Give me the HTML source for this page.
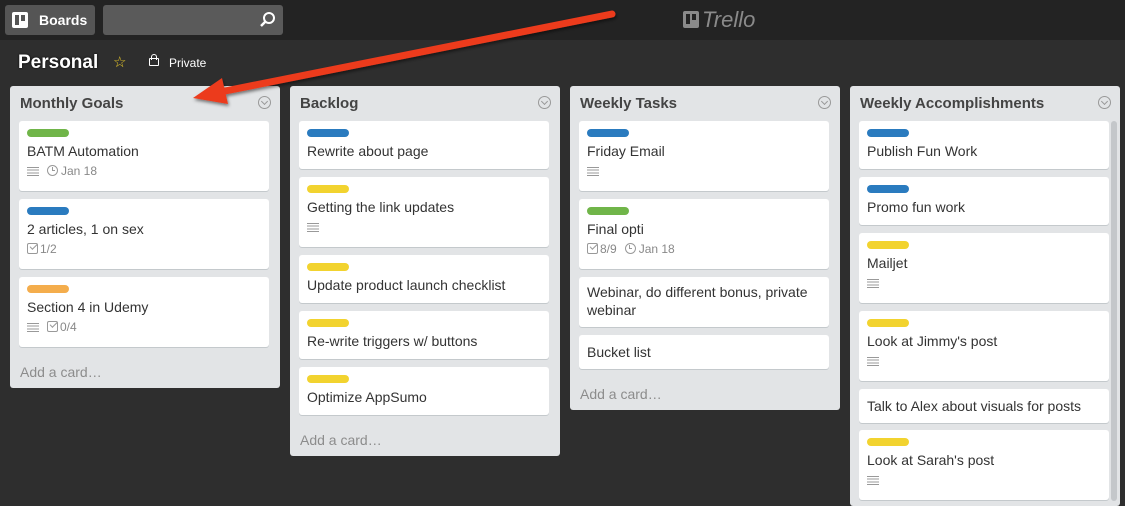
<!DOCTYPE html>
<html style="width:1125px;height:506px;overflow:hidden"><head><meta charset="utf-8"><style>
*{box-sizing:border-box;margin:0;padding:0}
body{width:1125px;height:506px;overflow:hidden;background:#2e2e2e;font-family:"Liberation Sans",sans-serif;position:relative}
.hdr{position:absolute;left:0;top:0;width:1125px;height:40px;background:#232323}
.btn{position:absolute;top:5px;height:30px;background:#555;border-radius:3px}
.list{position:absolute;top:86px;width:270px;background:#e2e4e6;border-radius:3px}
.lt{position:absolute;left:10px;top:9px;font-weight:bold;font-size:15px;color:#444}
.chev{position:absolute;right:9px;top:10px;width:13px;height:13px;border:1.5px solid #999;border-radius:50%}
.chev:after{content:"";position:absolute;left:3px;top:1.5px;width:4px;height:4px;border-right:1.5px solid #999;border-bottom:1.5px solid #999;transform:rotate(45deg)}
.card{position:absolute;left:9px;width:250px;background:#fff;border-radius:3px;box-shadow:0 1px 0 #c4c9cc;padding:8px 8px 0 8px;font-size:14px;color:#333;line-height:18px}
.nl{padding-top:6px}
.lb{width:42px;height:8px;border-radius:4px;margin-bottom:5px}
.g{background:#70b549}.b{background:#2a7bbf}.y{background:#f2d32f}.o{background:#f4ad4c}
.meta{margin-top:2px;font-size:12px;color:#888;height:18px;display:flex;align-items:center;gap:8px}
.desc{display:inline-block;width:12px;height:9px;background:repeating-linear-gradient(#999 0 1px,transparent 1px 2.7px)}
.clk{display:inline-block;width:11px;height:11px;border:1.3px solid #999;border-radius:50%;position:relative;vertical-align:-1px;margin-right:3px}
.clk:after{content:"";position:absolute;left:3.5px;top:1px;width:2px;height:3px;border-left:1.2px solid #999;border-bottom:1.2px solid #999}
.chk{display:inline-block;width:11px;height:11px;border:1.3px solid #999;border-radius:2px;position:relative;vertical-align:-1px;margin-right:2px}
.chk:after{content:"";position:absolute;left:2px;top:0;width:6px;height:3px;border-left:1.3px solid #999;border-bottom:1.3px solid #999;transform:rotate(-45deg)}
.add{position:absolute;left:10px;font-size:14px;color:#8c8c8c}
</style></head><body>
<div class="hdr"></div>
<div class="btn" style="left:5px;width:90px"></div>
<div style="position:absolute;left:12px;top:12px;width:16px;height:16px;background:#fff;border-radius:2px"><div style="position:absolute;left:3px;top:3px;width:4px;height:10px;background:#555"></div><div style="position:absolute;left:9px;top:3px;width:4px;height:6px;background:#555"></div></div>
<div style="position:absolute;left:39px;top:12px;font-weight:bold;font-size:14px;color:#fff">Boards</div>
<div class="btn" style="left:103px;width:180px;background:#5a5a5a"></div>
<svg style="position:absolute;left:258px;top:10px" width="20" height="20"><circle cx="11" cy="8" r="5" fill="none" stroke="#fff" stroke-width="2"/><line x1="7.5" y1="11.5" x2="3" y2="16" stroke="#fff" stroke-width="2.5"/></svg>
<div style="position:absolute;left:683px;top:11px;width:16px;height:17px;background:#8a8a8a;border-radius:2px"><div style="position:absolute;left:3px;top:3px;width:4px;height:10px;background:#232323"></div><div style="position:absolute;left:9px;top:3px;width:4px;height:6px;background:#232323"></div></div>
<div style="position:absolute;left:702px;top:7px;font-style:italic;font-size:22px;color:#8a8a8a">Trello</div>
<div style="position:absolute;left:18px;top:52px;font-weight:bold;font-size:19px;color:#fff;text-shadow:0 0 2px #000">Personal</div>
<div style="position:absolute;left:113px;top:53px;font-size:15px;color:#e8c82a">☆</div>
<div style="position:absolute;left:149px;top:58px;width:10px;height:8px;border:1.5px solid #fff;border-radius:1px"></div>
<div style="position:absolute;left:151px;top:54px;width:6px;height:6px;border:1.5px solid #fff;border-bottom:none;border-radius:3px 3px 0 0"></div>
<div style="position:absolute;left:169px;top:56px;font-size:12px;color:#fff">Private</div>

<div class="list" style="left:10px;height:302px"><div class="lt">Monthly Goals</div><div class="chev"></div>
<div class="card" style="top:35px;height:70px"><div class="lb g"></div>BATM Automation<div class="meta"><span class="desc"></span><span><span class="clk"></span>Jan 18</span></div></div>
<div class="card" style="top:113px;height:70px"><div class="lb b"></div>2 articles, 1 on sex<div class="meta"><span><span class="chk"></span>1/2</span></div></div>
<div class="card" style="top:191px;height:70px"><div class="lb o"></div>Section 4 in Udemy<div class="meta"><span class="desc"></span><span><span class="chk"></span>0/4</span></div></div>
<div class="add" style="top:278px">Add a card…</div></div>

<div class="list" style="left:290px;height:370px"><div class="lt">Backlog</div><div class="chev"></div>
<div class="card" style="top:35px;height:48px"><div class="lb b"></div>Rewrite about page</div>
<div class="card" style="top:91px;height:70px"><div class="lb y"></div>Getting the link updates<div class="meta"><span class="desc"></span></div></div>
<div class="card" style="top:169px;height:48px"><div class="lb y"></div>Update product launch checklist</div>
<div class="card" style="top:225px;height:48px"><div class="lb y"></div>Re-write triggers w/ buttons</div>
<div class="card" style="top:281px;height:48px"><div class="lb y"></div>Optimize AppSumo</div>
<div class="add" style="top:346px">Add a card…</div></div>

<div class="list" style="left:570px;height:324px"><div class="lt">Weekly Tasks</div><div class="chev"></div>
<div class="card" style="top:35px;height:70px"><div class="lb b"></div>Friday Email<div class="meta"><span class="desc"></span></div></div>
<div class="card" style="top:113px;height:70px"><div class="lb g"></div>Final opti<div class="meta"><span><span class="chk"></span>8/9</span><span><span class="clk"></span>Jan 18</span></div></div>
<div class="card nl" style="top:191px;height:50px">Webinar, do different bonus, private webinar</div>
<div class="card nl" style="top:249px;height:34px;padding-top:8px">Bucket list</div>
<div class="add" style="top:300px">Add a card…</div></div>

<div class="list" style="left:850px;height:420px"><div class="lt">Weekly Accomplishments</div><div class="chev"></div>
<div style="position:absolute;left:261px;top:35px;width:6px;height:380px;background:#c4c7ca;border-radius:3px"></div>
<div class="card" style="top:35px;height:48px"><div class="lb b"></div>Publish Fun Work</div>
<div class="card" style="top:91px;height:48px"><div class="lb b"></div>Promo fun work</div>
<div class="card" style="top:147px;height:70px"><div class="lb y"></div>Mailjet<div class="meta"><span class="desc"></span></div></div>
<div class="card" style="top:225px;height:70px"><div class="lb y"></div>Look at Jimmy's post<div class="meta"><span class="desc"></span></div></div>
<div class="card nl" style="top:303px;height:34px;padding-top:8px">Talk to Alex about visuals for posts</div>
<div class="card" style="top:344px;height:70px"><div class="lb y"></div>Look at Sarah's post<div class="meta"><span class="desc"></span></div></div>
</div>

<svg style="position:absolute;left:0;top:0" width="1125" height="506">
<defs><filter id="s"><feDropShadow dx="1" dy="2" stdDeviation="1.5" flood-color="#000" flood-opacity="0.5"/></filter></defs>
<g filter="url(#s)">
<line x1="612" y1="14" x2="215" y2="93" stroke="#ec3a1f" stroke-width="7" stroke-linecap="round"/>
<polygon points="193,98 222,78 228,104" fill="#ec3a1f"/>
</g></svg>
</body></html>
